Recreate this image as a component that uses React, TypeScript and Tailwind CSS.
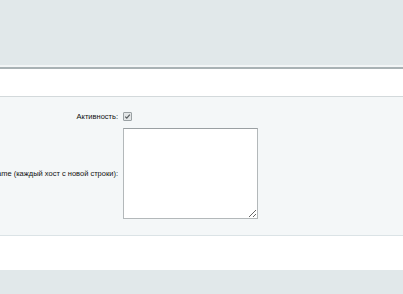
export default function App() {
  return (
    <div className="flex h-[294px] w-full flex-col bg-[#e1e8ea] font-['Liberation_Sans',Arial,sans-serif] text-[7.5px] text-[#111]">
      <div className="h-[65px] shrink-0 bg-[#e1e8ea]" />
      <div className="h-[2px] shrink-0 bg-[#f2f5f6]" />
      <div className="h-[2px] shrink-0 bg-[#a9b2b5]" />
      <div className="h-[28px] shrink-0 border-b border-[#d3d9db] bg-white" />
      <div className="flex shrink-0 flex-col gap-[6px] border-b border-[#dbe3e6] bg-[#f4f7f8] pb-[16px] pt-[14px]">
        <div className="flex items-center">
          <div className="flex w-[118px] shrink-0 justify-end overflow-hidden whitespace-nowrap">
            Активность:
          </div>
          <div className="pl-[5px]">
            <div className="flex h-[9px] w-[9px] items-center justify-center rounded-[1px] border border-[#9aa1a4] bg-[#e3e6e7]">
              <svg width="7" height="7" viewBox="0 0 7 7">
                <path d="M1.2 3.6 L2.8 5.2 L5.8 1.6" fill="none" stroke="#555b5e" strokeWidth="1.2" />
              </svg>
            </div>
          </div>
        </div>
        <div className="flex items-center">
          <div className="flex w-[118px] shrink-0 justify-end overflow-hidden whitespace-nowrap">
            Список хостов hostname (каждый хост с новой строки):
          </div>
          <div className="pl-[5px]">
            <textarea className="block h-[91px] w-[135px] resize border border-[#b3b8ba] border-t-[#9aa0a3] bg-white" />
          </div>
        </div>
      </div>
      <div className="h-[34px] shrink-0 bg-white" />
      <div className="grow bg-[#e1e8ea]" />
    </div>
  )
}
